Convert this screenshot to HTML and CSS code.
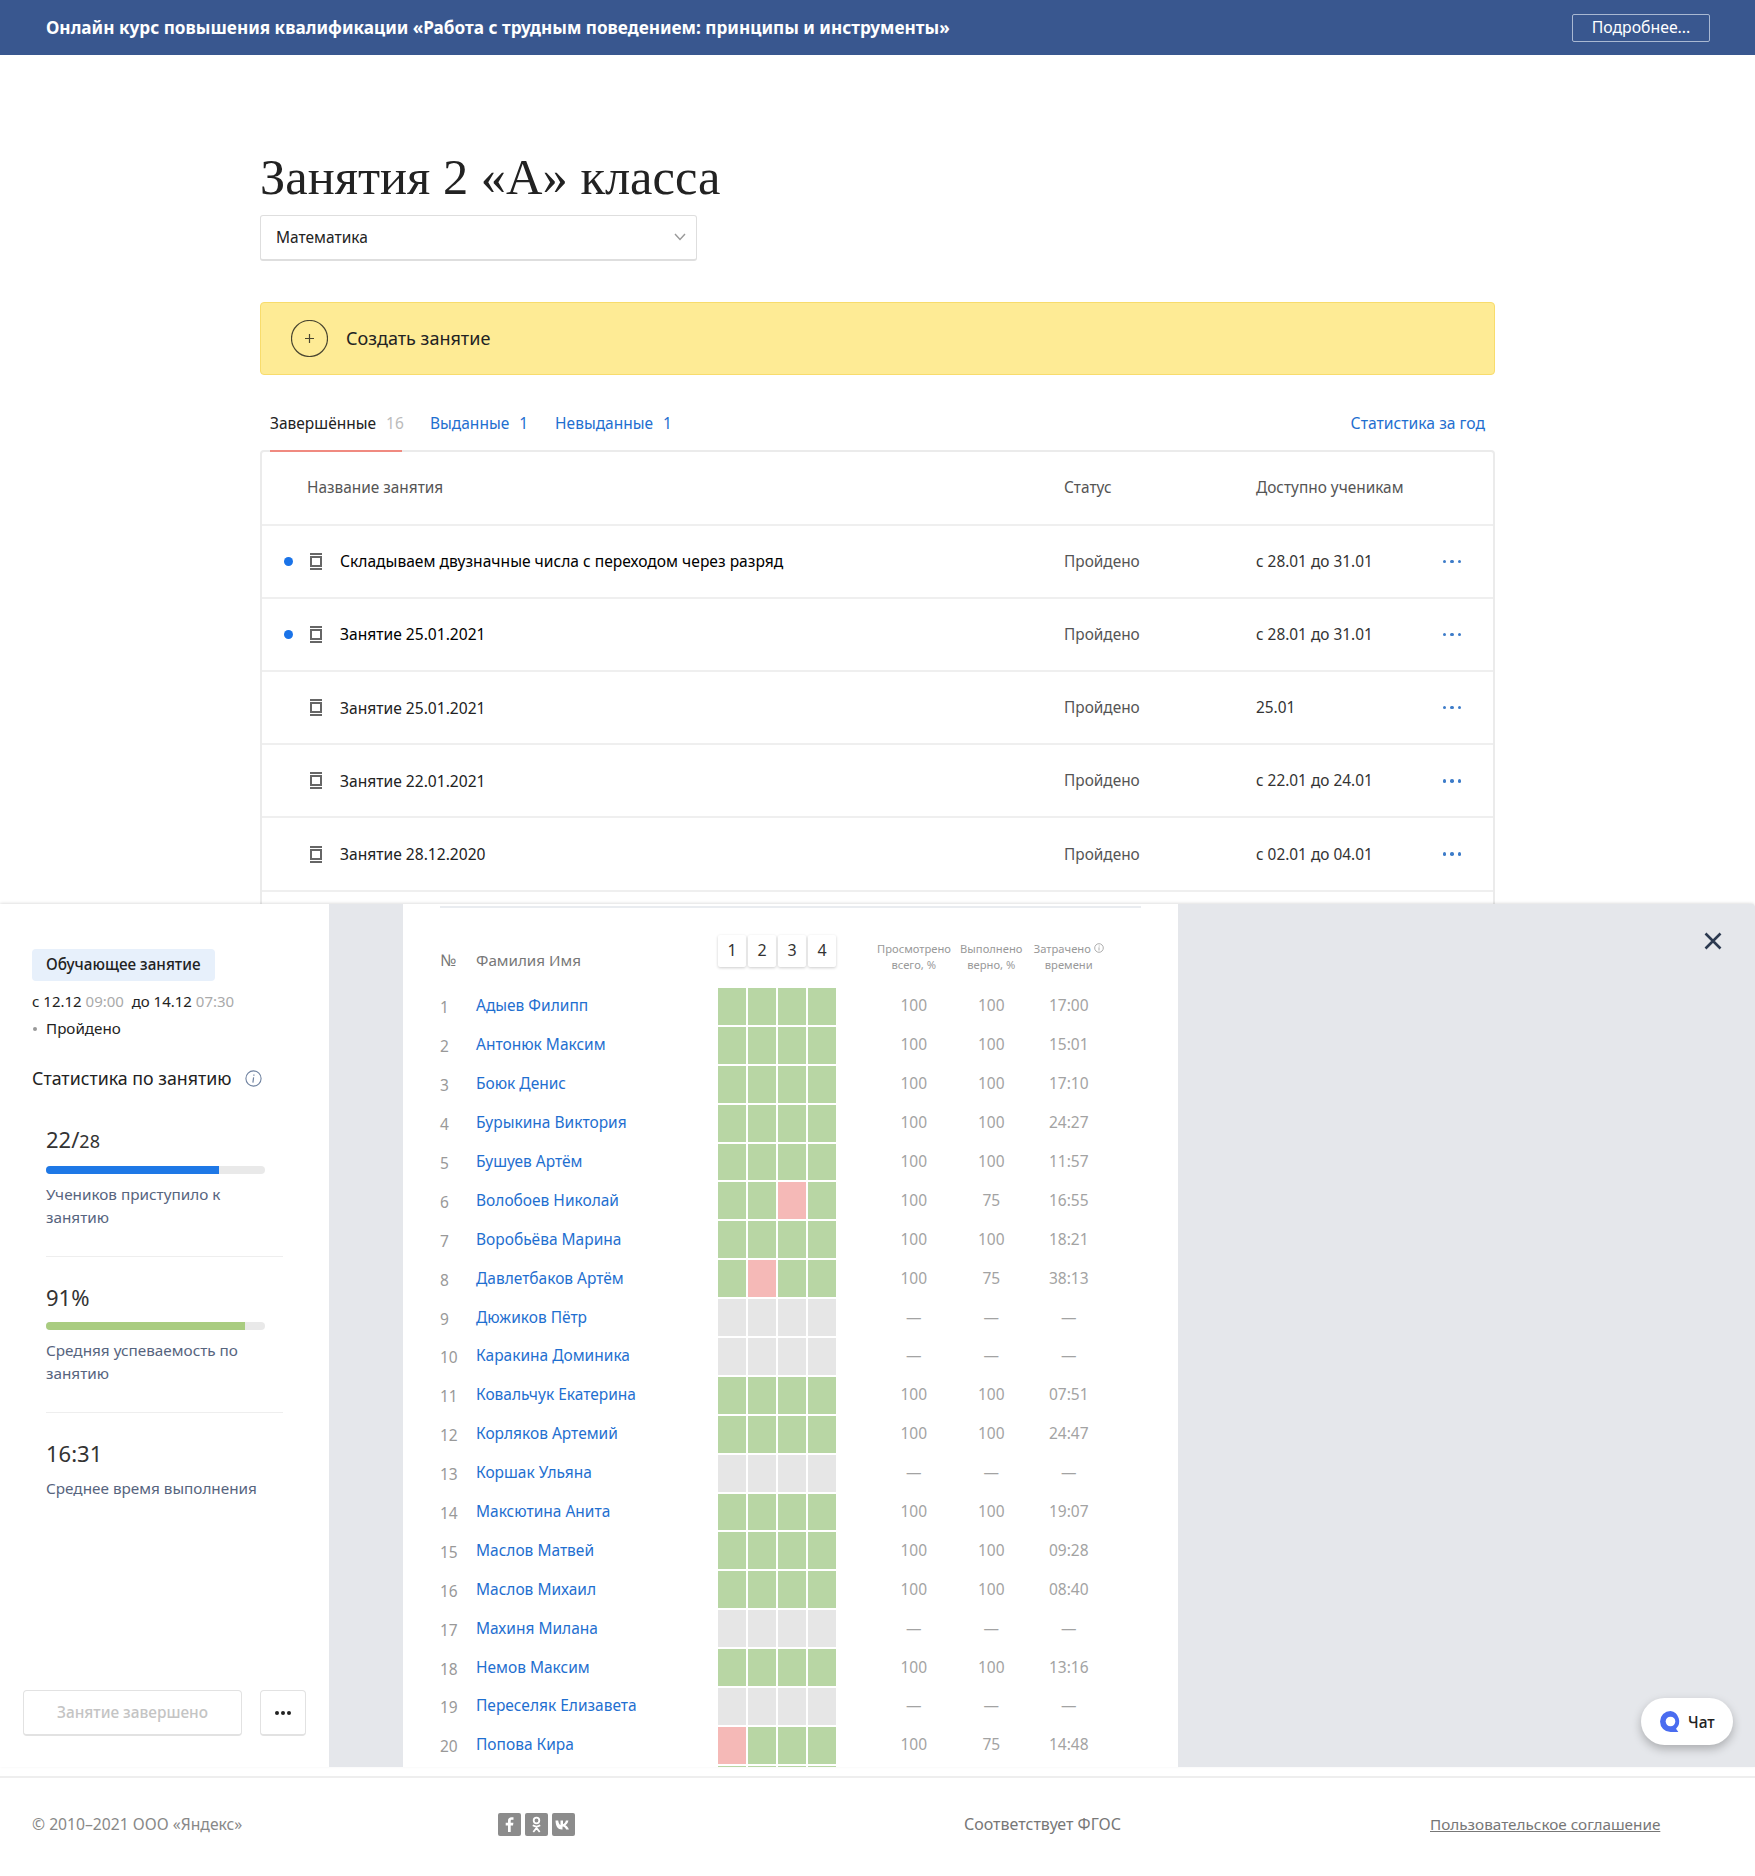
FILE: index.html
```html
<!DOCTYPE html>
<html lang="ru">
<head>
  <meta charset="UTF-8">
  <title>Занятия 2 «А» класса</title>
  <link rel="stylesheet" href="styles.css">
</head>
<body>
  <div class="promo">
    <span class="promo-text">Онлайн курс повышения квалификации «Работа с трудным поведением: принципы и инструменты»</span>
    <a class="promo-btn">Подробнее...</a>
  </div>

  <main class="main">
    <div class="wrap">
      <h1>Занятия 2 «А» класса</h1>
      <div class="select">
        <span>Математика</span>
        <svg width="12" height="8" viewBox="0 0 12 8"><path d="M1 1l5 5.5L11 1" fill="none" stroke="#999" stroke-width="1.4"/></svg>
      </div>

      <div class="create">
        <span class="create-icon">
          <svg width="37" height="37" viewBox="0 0 37 37"><circle cx="18.5" cy="18.5" r="18" fill="none" stroke="#4a4630" stroke-width="1.2"/><path d="M18.5 14v9M14 18.5h9" stroke="#4a4630" stroke-width="1.2"/></svg>
        </span>
        <span>Создать занятие</span>
      </div>

      <div class="tabs">
        <a class="tab active">Завершённые <span class="count">16</span></a>
        <a class="tab">Выданные <span class="count">1</span></a>
        <a class="tab">Невыданные <span class="count">1</span></a>
        <a class="tab-year">Статистика за год</a>
      </div>

      <div class="lessons">
        <div class="lesson lesson-head">
          <span class="lesson-head-name">Название занятия</span>
          <span>Статус</span>
          <span>Доступно ученикам</span>
        </div>
        <div class="lesson">
          <i class="dot"></i>
          <svg class="book" width="12" height="17" viewBox="0 0 12 17"><path d="M0 1h12M0 16h12" stroke="#666" stroke-width="2"/><rect x="1" y="4" width="10" height="9" fill="none" stroke="#666" stroke-width="2"/></svg>
          <span class="lesson-name unread">Складываем двузначные числа с переходом через разряд</span>
          <span class="lesson-status">Пройдено</span>
          <span class="lesson-date">с 28.01 до 31.01</span>
          <span class="more"><i></i><i></i><i></i></span>
        </div>
        <div class="lesson">
          <i class="dot"></i>
          <svg class="book" width="12" height="17" viewBox="0 0 12 17"><path d="M0 1h12M0 16h12" stroke="#666" stroke-width="2"/><rect x="1" y="4" width="10" height="9" fill="none" stroke="#666" stroke-width="2"/></svg>
          <span class="lesson-name unread">Занятие 25.01.2021</span>
          <span class="lesson-status">Пройдено</span>
          <span class="lesson-date">с 28.01 до 31.01</span>
          <span class="more"><i></i><i></i><i></i></span>
        </div>
        <div class="lesson">
          <span></span>
          <svg class="book" width="12" height="17" viewBox="0 0 12 17"><path d="M0 1h12M0 16h12" stroke="#666" stroke-width="2"/><rect x="1" y="4" width="10" height="9" fill="none" stroke="#666" stroke-width="2"/></svg>
          <span class="lesson-name">Занятие 25.01.2021</span>
          <span class="lesson-status">Пройдено</span>
          <span class="lesson-date">25.01</span>
          <span class="more"><i></i><i></i><i></i></span>
        </div>
        <div class="lesson">
          <span></span>
          <svg class="book" width="12" height="17" viewBox="0 0 12 17"><path d="M0 1h12M0 16h12" stroke="#666" stroke-width="2"/><rect x="1" y="4" width="10" height="9" fill="none" stroke="#666" stroke-width="2"/></svg>
          <span class="lesson-name">Занятие 22.01.2021</span>
          <span class="lesson-status">Пройдено</span>
          <span class="lesson-date">с 22.01 до 24.01</span>
          <span class="more"><i></i><i></i><i></i></span>
        </div>
        <div class="lesson">
          <span></span>
          <svg class="book" width="12" height="17" viewBox="0 0 12 17"><path d="M0 1h12M0 16h12" stroke="#666" stroke-width="2"/><rect x="1" y="4" width="10" height="9" fill="none" stroke="#666" stroke-width="2"/></svg>
          <span class="lesson-name">Занятие 28.12.2020</span>
          <span class="lesson-status">Пройдено</span>
          <span class="lesson-date">с 02.01 до 04.01</span>
          <span class="more"><i></i><i></i><i></i></span>
        </div>
        <div class="lesson"></div>
      </div>
    </div>
  </main>

  <section class="panel">
    <aside class="side">
      <div class="badge">Обучающее занятие</div>
      <div class="dates">с 12.12 <span>09:00</span>&nbsp; до 14.12 <span>07:30</span></div>
      <div class="state">Пройдено</div>
      <h2 class="side-title">Статистика по занятию
        <svg width="17" height="17" viewBox="0 0 17 17"><circle cx="8.5" cy="8.5" r="7.6" fill="none" stroke="#6f82a0" stroke-width="1.1"/><path d="M8.9 4.4v1.4M8.6 7.4L7.9 12.6" stroke="#6f82a0" stroke-width="1.2"/></svg>
      </h2>

      <div class="stat">
        <div class="stat-value">22/<small>28</small></div>
        <div class="bar"><div class="bar-fill" style="width: 79%"></div></div>
        <div class="stat-label">Учеников приступило к занятию</div>
      </div>
      <div class="stat">
        <div class="stat-value">91%</div>
        <div class="bar"><div class="bar-fill green" style="width: 91%"></div></div>
        <div class="stat-label">Средняя успеваемость по занятию</div>
      </div>
      <div class="stat stat-last">
        <div class="stat-value">16:31</div>
        <div class="stat-label">Среднее время выполнения</div>
      </div>

      <div class="side-actions">
        <button class="btn-done">Занятие завершено</button>
        <button class="btn-more"><i></i><i></i><i></i></button>
      </div>
    </aside>

    <div class="sheet">
      <div class="sheet-head">
        <span class="col-num">№</span>
        <span class="col-name">Фамилия Имя</span>
        <div class="tasks">
          <span class="task">1</span><span class="task">2</span><span class="task">3</span><span class="task">4</span>
        </div>
        <span class="col-val">Просмотрено всего, %</span>
        <span class="col-val">Выполнено верно, %</span>
        <span class="col-val">Затрачено <svg width="10" height="10" viewBox="0 0 10 10"><circle cx="5" cy="5" r="4.3" fill="none" stroke="#999" stroke-width=".8"/><path d="M5.2 2.5v1M5 4.3v3.2" stroke="#999" stroke-width=".8"/></svg> времени</span>
      </div>

      <div class="row"><span class="num">1</span><a class="name">Адыев Филипп</a><div class="cells"><i></i><i></i><i></i><i></i></div><span class="val">100</span><span class="val">100</span><span class="val">17:00</span></div>
      <div class="row"><span class="num">2</span><a class="name">Антонюк Максим</a><div class="cells"><i></i><i></i><i></i><i></i></div><span class="val">100</span><span class="val">100</span><span class="val">15:01</span></div>
      <div class="row"><span class="num">3</span><a class="name">Боюк Денис</a><div class="cells"><i></i><i></i><i></i><i></i></div><span class="val">100</span><span class="val">100</span><span class="val">17:10</span></div>
      <div class="row"><span class="num">4</span><a class="name">Бурыкина Виктория</a><div class="cells"><i></i><i></i><i></i><i></i></div><span class="val">100</span><span class="val">100</span><span class="val">24:27</span></div>
      <div class="row"><span class="num">5</span><a class="name">Бушуев Артём</a><div class="cells"><i></i><i></i><i></i><i></i></div><span class="val">100</span><span class="val">100</span><span class="val">11:57</span></div>
      <div class="row"><span class="num">6</span><a class="name">Волобоев Николай</a><div class="cells"><i></i><i></i><i class="bad"></i><i></i></div><span class="val">100</span><span class="val">75</span><span class="val">16:55</span></div>
      <div class="row"><span class="num">7</span><a class="name">Воробьёва Марина</a><div class="cells"><i></i><i></i><i></i><i></i></div><span class="val">100</span><span class="val">100</span><span class="val">18:21</span></div>
      <div class="row"><span class="num">8</span><a class="name">Давлетбаков Артём</a><div class="cells"><i></i><i class="bad"></i><i></i><i></i></div><span class="val">100</span><span class="val">75</span><span class="val">38:13</span></div>
      <div class="row"><span class="num">9</span><a class="name">Дюжиков Пётр</a><div class="cells none"><i></i><i></i><i></i><i></i></div><span class="val">—</span><span class="val">—</span><span class="val">—</span></div>
      <div class="row"><span class="num">10</span><a class="name">Каракина Доминика</a><div class="cells none"><i></i><i></i><i></i><i></i></div><span class="val">—</span><span class="val">—</span><span class="val">—</span></div>
      <div class="row"><span class="num">11</span><a class="name">Ковальчук Екатерина</a><div class="cells"><i></i><i></i><i></i><i></i></div><span class="val">100</span><span class="val">100</span><span class="val">07:51</span></div>
      <div class="row"><span class="num">12</span><a class="name">Корляков Артемий</a><div class="cells"><i></i><i></i><i></i><i></i></div><span class="val">100</span><span class="val">100</span><span class="val">24:47</span></div>
      <div class="row"><span class="num">13</span><a class="name">Коршак Ульяна</a><div class="cells none"><i></i><i></i><i></i><i></i></div><span class="val">—</span><span class="val">—</span><span class="val">—</span></div>
      <div class="row"><span class="num">14</span><a class="name">Максютина Анита</a><div class="cells"><i></i><i></i><i></i><i></i></div><span class="val">100</span><span class="val">100</span><span class="val">19:07</span></div>
      <div class="row"><span class="num">15</span><a class="name">Маслов Матвей</a><div class="cells"><i></i><i></i><i></i><i></i></div><span class="val">100</span><span class="val">100</span><span class="val">09:28</span></div>
      <div class="row"><span class="num">16</span><a class="name">Маслов Михаил</a><div class="cells"><i></i><i></i><i></i><i></i></div><span class="val">100</span><span class="val">100</span><span class="val">08:40</span></div>
      <div class="row"><span class="num">17</span><a class="name">Махиня Милана</a><div class="cells none"><i></i><i></i><i></i><i></i></div><span class="val">—</span><span class="val">—</span><span class="val">—</span></div>
      <div class="row"><span class="num">18</span><a class="name">Немов Максим</a><div class="cells"><i></i><i></i><i></i><i></i></div><span class="val">100</span><span class="val">100</span><span class="val">13:16</span></div>
      <div class="row"><span class="num">19</span><a class="name">Переселяк Елизавета</a><div class="cells none"><i></i><i></i><i></i><i></i></div><span class="val">—</span><span class="val">—</span><span class="val">—</span></div>
      <div class="row"><span class="num">20</span><a class="name">Попова Кира</a><div class="cells"><i class="bad"></i><i></i><i></i><i></i></div><span class="val">100</span><span class="val">75</span><span class="val">14:48</span></div>
      <div class="row"><span class="num"></span><a class="name"></a><div class="cells"><i></i><i></i><i></i><i></i></div></div>
    </div>

    <button class="close">
      <svg width="18" height="18" viewBox="0 0 18 18"><path d="M1.5 1.5l15 15M16.5 1.5l-15 15" stroke="#2c3a50" stroke-width="2.6"/></svg>
    </button>
    <div class="chat">
      <svg width="23" height="23" viewBox="0 0 22 22"><path d="M11 1a10 10 0 1 0 0 20h7.500l-2.200-3A10 10 0 0 0 11 1z" fill="#4a6cf0"/><circle cx="11" cy="11" r="4.600" fill="#fff"/></svg>
      <span>Чат</span>
    </div>
  </section>

  <footer class="footer">
    <span class="copy">© 2010–2021 ООО «Яндекс»</span>
    <div class="social">
      <a class="social-item"><svg width="23" height="23" viewBox="0 0 23 23"><path d="M12.700 19v-6.600h2.300l.4-2.700h-2.700V8c0-.8.3-1.300 1.400-1.300h1.400V4.300c-.3 0-1.100-.1-2-.1-2.100 0-3.500 1.200-3.500 3.500v2H7.700v2.700H10V19z" fill="#fff"/></svg></a>
      <a class="social-item"><svg width="23" height="23" viewBox="0 0 23 23"><circle cx="11.500" cy="7.500" r="2.800" fill="none" stroke="#fff" stroke-width="1.800"/><path d="M7.800 12.300c2.200 1.500 5.200 1.500 7.400 0M11.500 14v1M8.300 19l3.200-4 3.200 4" fill="none" stroke="#fff" stroke-width="1.800"/></svg></a>
      <a class="social-item"><svg width="23" height="23" viewBox="0 0 23 23"><path d="M3.500 7.500h2.700c.3 2.600 1.200 4 2.300 4.500V7.500H11v3.700c1.200-.2 2.400-1.700 2.900-3.700h2.500c-.4 2.400-1.900 4-3 4.700 1.200.6 2.800 2 3.500 4.300h-2.700c-.6-1.700-1.800-2.900-3.700-3.100v3.100h-.6c-4 0-6.200-3-6.400-9z" fill="#fff"/></svg></a>
    </div>
    <span class="fgos">Соответствует ФГОС</span>
    <a class="terms">Пользовательское соглашение</a>
  </footer>
</body>
</html>
```

FILE: styles.css
```css
* {
  box-sizing: border-box;
}

body {
  margin: 0;
  width: 1755px;
  background-color: #fff;
  color: #222;
  font-family: "Noto Sans", "Open Sans", Arial, sans-serif;
  font-size: 16px;
}

/* top banner */
.promo {
  display: flex;
  justify-content: space-between;
  align-items: center;
  height: 55px;
  padding: 0 45px 0 46px;
  background-color: #39578f;
  color: #fff;
}

.promo-text {
  font-size: 17.2px;
  font-weight: 700;
}

.promo-btn {
  width: 138px;
  height: 28px;
  border: 1px solid #a9b8d2;
  border-radius: 2px;
  text-align: center;
  font-size: 15.8px;
  line-height: 25px;
}

/* lessons list, cut off by the panel below */
.main {
  height: 849px;
  overflow: hidden;
}

.wrap {
  width: 1235px;
  margin: 0 auto;
  padding-top: 92px;
}

h1 {
  margin: 0 0 8px;
  font-family: "Liberation Serif", serif;
  font-size: 50.5px;
  font-weight: 400;
  line-height: 60px;
  color: #222;
}

.select {
  display: flex;
  justify-content: space-between;
  align-items: center;
  width: 437px;
  height: 46px;
  padding: 0 10px 1px 15px;
  border: 1px solid #dedede;
  border-bottom-width: 2px;
  border-radius: 3px;
  font-size: 15.5px;
}

.create {
  display: flex;
  align-items: center;
  height: 73px;
  margin-top: 41px;
  padding: 0 0 1px 30px;
  background-color: #feeb95;
  border: 1px solid #f8dc6c;
  border-radius: 4px;
  font-size: 18px;
}

.create-icon {
  display: flex;
  margin-right: 18px;
}

.tabs {
  position: relative;
  display: flex;
  align-items: center;
  height: 58px;
  margin-top: 19px;
  margin-bottom: -2px;
  padding: 0 10px;
  font-size: 15.5px;
  color: #1f6fd0;
}

.tab {
  display: flex;
  align-items: center;
  height: 58px;
  margin-right: 27px;
  gap: 5px;
}

.tab .count {
  margin-left: 5px;
}

.tab.active {
  width: 132px;
  margin-right: 28px;
  color: #222;
  border-top: 2px solid transparent;
  border-bottom: 2px solid #f08a80;
}

.tab.active .count {
  color: #bbb;
}

.tab-year {
  margin-left: auto;
  font-size: 15.7px;
}

.lessons {
  border: 2px solid #ebebeb;
  border-radius: 4px 4px 0 0;
}

.lesson {
  display: grid;
  grid-template-columns: 26px 29px 725px 192px 170px 52px;
  align-items: center;
  height: 73.2px;
  padding-left: 22px;
  border-bottom: 2px solid #efefef;
  font-size: 15.4px;
}

.lesson-head {
  color: #555;
  height: 73.7px;
}

.lesson-head-name {
  grid-column: 1 / 4;
  padding-left: 23px;
}

.dot {
  width: 9px;
  height: 9px;
  border-radius: 50%;
  background-color: #1a73e8;
}

.lesson-name {
  padding-left: 1px;
  color: #222;
  font-size: 15.6px;
}

.lesson-name.unread {
  color: #000;
}

.lesson-status {
  color: #555;
}

.lesson-date {
  color: #333;
}

.more {
  display: flex;
  justify-content: center;
  gap: 4px;
}

.more i {
  width: 3.5px;
  height: 3.5px;
  border-radius: 50%;
  background-color: #3d7cc9;
}

/* bottom panel */
.panel {
  position: relative;
  display: flex;
  height: 863px;
  background-color: #e5e7eb;
  box-shadow: 0 -1px 3px rgba(0, 0, 0, 0.12);
  border-radius: 0 4px 0 0;
}

.side {
  position: relative;
  width: 329px;
  padding: 45px 0 0 32px;
  background-color: #fff;
}

.badge {
  width: 183px;
  height: 32px;
  padding-left: 14px;
  background-color: #e7f0fb;
  border-radius: 4px;
  font-size: 15.3px;
  font-weight: 500;
  line-height: 31px;
}

.dates {
  margin-top: 10px;
  font-size: 15px;
  line-height: 20px;
}

.dates span {
  color: #aaa;
}

.state {
  position: relative;
  margin-top: 7px;
  padding-left: 14px;
  font-size: 15.2px;
  line-height: 20px;
}

.state::before {
  content: "";
  position: absolute;
  left: 1px;
  top: 9px;
  width: 4px;
  height: 4px;
  border-radius: 50%;
  background-color: #999;
}

.side-title {
  display: flex;
  align-items: center;
  gap: 13px;
  margin: 28px 0 0;
  font-size: 17.8px;
  font-weight: 400;
  line-height: 24px;
}

.stat {
  width: 237px;
  margin-left: 14px;
  padding-bottom: 27px;
  border-bottom: 1px solid #eee;
}

.side-title + .stat {
  margin-top: 34px;
}

.stat + .stat {
  padding-top: 25px;
}

.stat-last {
  border-bottom: 0;
}

.stat-value {
  font-size: 22px;
  line-height: 30px;
  color: #333;
}

.stat-value small {
  font-size: 18px;
}

.bar {
  width: 219px;
  height: 8px;
  margin-top: 10px;
  background-color: #e9e9e9;
  border-radius: 4px;
  overflow: hidden;
}

.bar-fill {
  height: 100%;
  background-color: #1e78e6;
}

.bar-fill.green {
  background-color: #a9cc80;
}

.stat-label {
  width: 219px;
  margin-top: 9px;
  font-size: 15.3px;
  line-height: 23px;
  color: #56647e;
}

.side-actions {
  position: absolute;
  left: 23px;
  top: 786px;
  display: flex;
  gap: 18px;
}

.btn-done,
.btn-more {
  height: 46px;
  background-color: #fff;
  border: 1px solid #e2e2e2;
  border-bottom-width: 2px;
  border-radius: 4px;
  font-family: inherit;
}

.btn-done {
  width: 219px;
  color: #c4c4c4;
  font-size: 15.4px;
  font-weight: 500;
}

.btn-more {
  display: flex;
  justify-content: center;
  align-items: center;
  gap: 2px;
  width: 46px;
}

.btn-more i {
  width: 4px;
  height: 4px;
  border-radius: 50%;
  background-color: #222;
}

.sheet {
  width: 775px;
  margin-left: 74px;
  padding: 0 37px;
  background-color: #fff;
  overflow: hidden;
}

.sheet-head {
  display: flex;
  align-items: flex-start;
  height: 82px;
  margin-top: 2px;
  padding-top: 27px;
  border-top: 2px solid #e9ecf0;
  color: #777;
}

.col-num {
  width: 36px;
  padding-top: 15px;
  font-size: 16px;
  line-height: 20px;
}

.col-name {
  width: 242px;
  padding-top: 15px;
  font-size: 15.2px;
  line-height: 20px;
}

.tasks {
  display: flex;
  gap: 2px;
  width: 118px;
  margin-right: 39px;
}

.task {
  width: 28px;
  height: 32px;
  border-radius: 2px;
  box-shadow: 0 1px 3px rgba(0, 0, 0, 0.2);
  background-color: #fff;
  color: #333;
  font-size: 16px;
  line-height: 31px;
  text-align: center;
}

.col-val {
  width: 77.5px;
  padding: 6px 2px 0;
  font-size: 11.2px;
  line-height: 16px;
  text-align: center;
  color: #999;
}

.row {
  display: flex;
  align-items: center;
  height: 38.9px;
  padding-bottom: 2px;
}

.num {
  width: 36px;
  padding-top: 2px;
  color: #999;
  font-size: 15.5px;
}

.name {
  width: 242px;
  padding-bottom: 2px;
  color: #1f6fd0;
  font-size: 15.5px;
}

.cells {
  display: flex;
  align-self: stretch;
  gap: 2px;
  width: 118px;
  margin-right: 39px;
}

.cells i {
  width: 28px;
  background-color: #b8d6a4;
}

.cells i.bad {
  background-color: #f5b9b7;
}

.cells.none i {
  background-color: #e6e6e6;
}

.val {
  width: 77.5px;
  padding-bottom: 2px;
  color: #a3a3a3;
  font-size: 15.5px;
  text-align: center;
}

.close {
  position: absolute;
  right: 33px;
  top: 28px;
  padding: 0;
  border: 0;
  background: none;
}

.chat {
  position: absolute;
  left: 1641px;
  top: 794px;
  display: flex;
  align-items: center;
  gap: 6px;
  width: 92px;
  height: 47px;
  padding-left: 18px;
  background-color: #fff;
  border-radius: 24px;
  box-shadow: 0 4px 10px rgba(0, 0, 0, 0.25);
  font-size: 15.5px;
  font-weight: 500;
}

/* footer */
.footer {
  display: flex;
  align-items: center;
  height: 100px;
  margin-top: 9px;
  padding: 0 0 6px 32px;
  border-top: 2px solid #eee;
  font-size: 15px;
  color: #777;
}

.copy {
  width: 466px;
  font-size: 15.7px;
  color: #888;
}

.social {
  display: flex;
  gap: 4px;
  width: 466px;
}

.social-item {
  display: block;
  width: 23px;
  height: 23px;
  background-color: #8c8c8c;
  border-radius: 2px;
}

.fgos {
  width: 466px;
  font-size: 16px;
}

.terms {
  font-size: 15.3px;
  text-decoration: underline;
}
```
